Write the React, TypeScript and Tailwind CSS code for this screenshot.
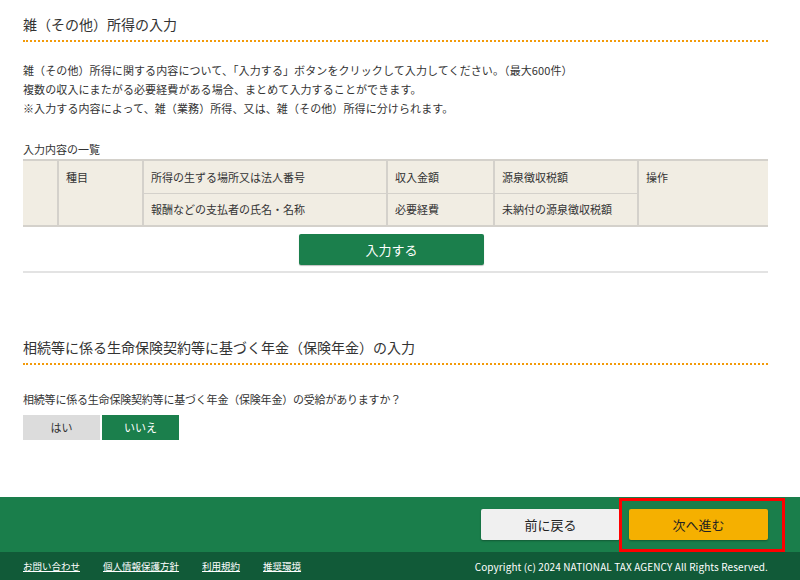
import React from 'react';

const font = { fontFamily: '"Noto Sans CJK JP", "Noto Sans", sans-serif' };

const SectionTitle: React.FC<{ children: React.ReactNode }> = ({ children }) => (
  <h2 className="text-[14px] leading-[20px] text-[#333] pb-[6px] border-b-2 border-dotted border-[#f29a0a]">
    {children}
  </h2>
);

export default function App() {
  return (
    <div className="w-[800px] h-[580px] bg-white flex flex-col overflow-hidden text-[#333]" style={font}>
      {/* Main content */}
      <main className="h-[497px] pl-[23px] pr-[32px] pt-[14px]">
        <SectionTitle>雑（その他）所得の入力</SectionTitle>

        <div className="mt-[19px] text-[11px] leading-[19px] tracking-[0.1px]">
          <p>雑（その他）所得に関する内容について、「入力する」ボタンをクリックして入力してください。（最大600件）</p>
          <p>複数の収入にまたがる必要経費がある場合、まとめて入力することができます。</p>
          <p>※入力する内容によって、雑（業務）所得、又は、雑（その他）所得に分けられます。</p>
        </div>

        <p className="mt-[23px] text-[11px] leading-[16px]">入力内容の一覧</p>
        <table className="mt-[2px] w-full border-collapse bg-[#f1ede3] text-[11px] table-fixed">
          <colgroup>
            <col className="w-[35px]" />
            <col className="w-[85px]" />
            <col className="w-[244px]" />
            <col className="w-[107px]" />
            <col className="w-[144px]" />
            <col />
          </colgroup>
          <tbody>
            <tr className="h-[33px]">
              <td rowSpan={2} className="border-y-2 border-r-2 border-[#d4d1cb]"></td>
              <td rowSpan={2} className="border-y-2 border-x-2 border-[#d4d1cb] align-top px-[7px] pt-[8px]">種目</td>
              <td className="border-t-2 border-x-2 border-b border-[#d4d1cb] px-[7px]">所得の生ずる場所又は法人番号</td>
              <td className="border-t-2 border-x-2 border-b border-[#d4d1cb] px-[7px]">収入金額</td>
              <td className="border-t-2 border-x-2 border-b border-[#d4d1cb] px-[7px]">源泉徴収税額</td>
              <td rowSpan={2} className="border-y-2 border-l-2 border-[#d4d1cb] align-top px-[7px] pt-[8px]">操作</td>
            </tr>
            <tr className="h-[33px]">
              <td className="border-b-2 border-x-2 border-[#d4d1cb] px-[7px]">報酬などの支払者の氏名・名称</td>
              <td className="border-b-2 border-x-2 border-[#d4d1cb] px-[7px]">必要経費</td>
              <td className="border-b-2 border-x-2 border-[#d4d1cb] px-[7px]">未納付の源泉徴収税額</td>
            </tr>
          </tbody>
        </table>

        <div className="flex justify-center mt-[7px]">
          <button className="mr-[8px] w-[185px] h-[31px] rounded-[2px] bg-[#1b7f4c] text-white text-[13px] shadow-[0_1px_1px_rgba(0,0,0,0.25)]">
            入力する
          </button>
        </div>
        <div className="mt-[6px] h-[2px] bg-[#e3e3e3]" />

        <div className="mt-[64px]">
          <SectionTitle>相続等に係る生命保険契約等に基づく年金（保険年金）の入力</SectionTitle>
        </div>

        <p className="mt-[26px] text-[11px] leading-[16px] tracking-[-0.2px]">相続等に係る生命保険契約等に基づく年金（保険年金）の受給がありますか？</p>
        <div className="mt-[8px] flex gap-[2px]">
          <button className="w-[77px] h-[25px] bg-[#dcdcdc] text-[#333] text-[11px]">はい</button>
          <button className="w-[77px] h-[25px] bg-[#1b7f4c] text-white text-[11px]">いいえ</button>
        </div>
      </main>

      {/* Footer navigation */}
      <div className="h-[55px] bg-[#1a7e4b] flex items-center justify-end pr-[15px]">
        <button className="w-[139px] h-[31px] rounded-[2px] bg-[#f0f0f0] text-[#222] text-[13px] shadow-[0_1px_2px_rgba(0,0,0,0.3)]">
          前に戻る
        </button>
        <div className="ml-[-1px] w-[166px] h-[54px] border-[3px] border-[#ff0000] flex items-center pl-[7px]">
          <button className="w-[139px] h-[31px] rounded-[2px] bg-[#f5b000] text-[#222] text-[13px] shadow-[0_1px_2px_rgba(0,0,0,0.3)]">
            次へ進む
          </button>
        </div>
      </div>

      {/* Bottom bar */}
      <footer className="flex-1 bg-[#115a38] flex items-center pl-[23px] pr-[32px] text-white text-[10px]">
        <nav className="flex gap-[23px] text-[9.5px]">
          <a className="underline">お問い合わせ</a>
          <a className="underline">個人情報保護方針</a>
          <a className="underline">利用規約</a>
          <a className="underline">推奨環境</a>
        </nav>
        <span className="ml-auto tracking-[0.1px]">Copyright (c) 2024 NATIONAL TAX AGENCY All Rights Reserved.</span>
      </footer>
    </div>
  );
}
